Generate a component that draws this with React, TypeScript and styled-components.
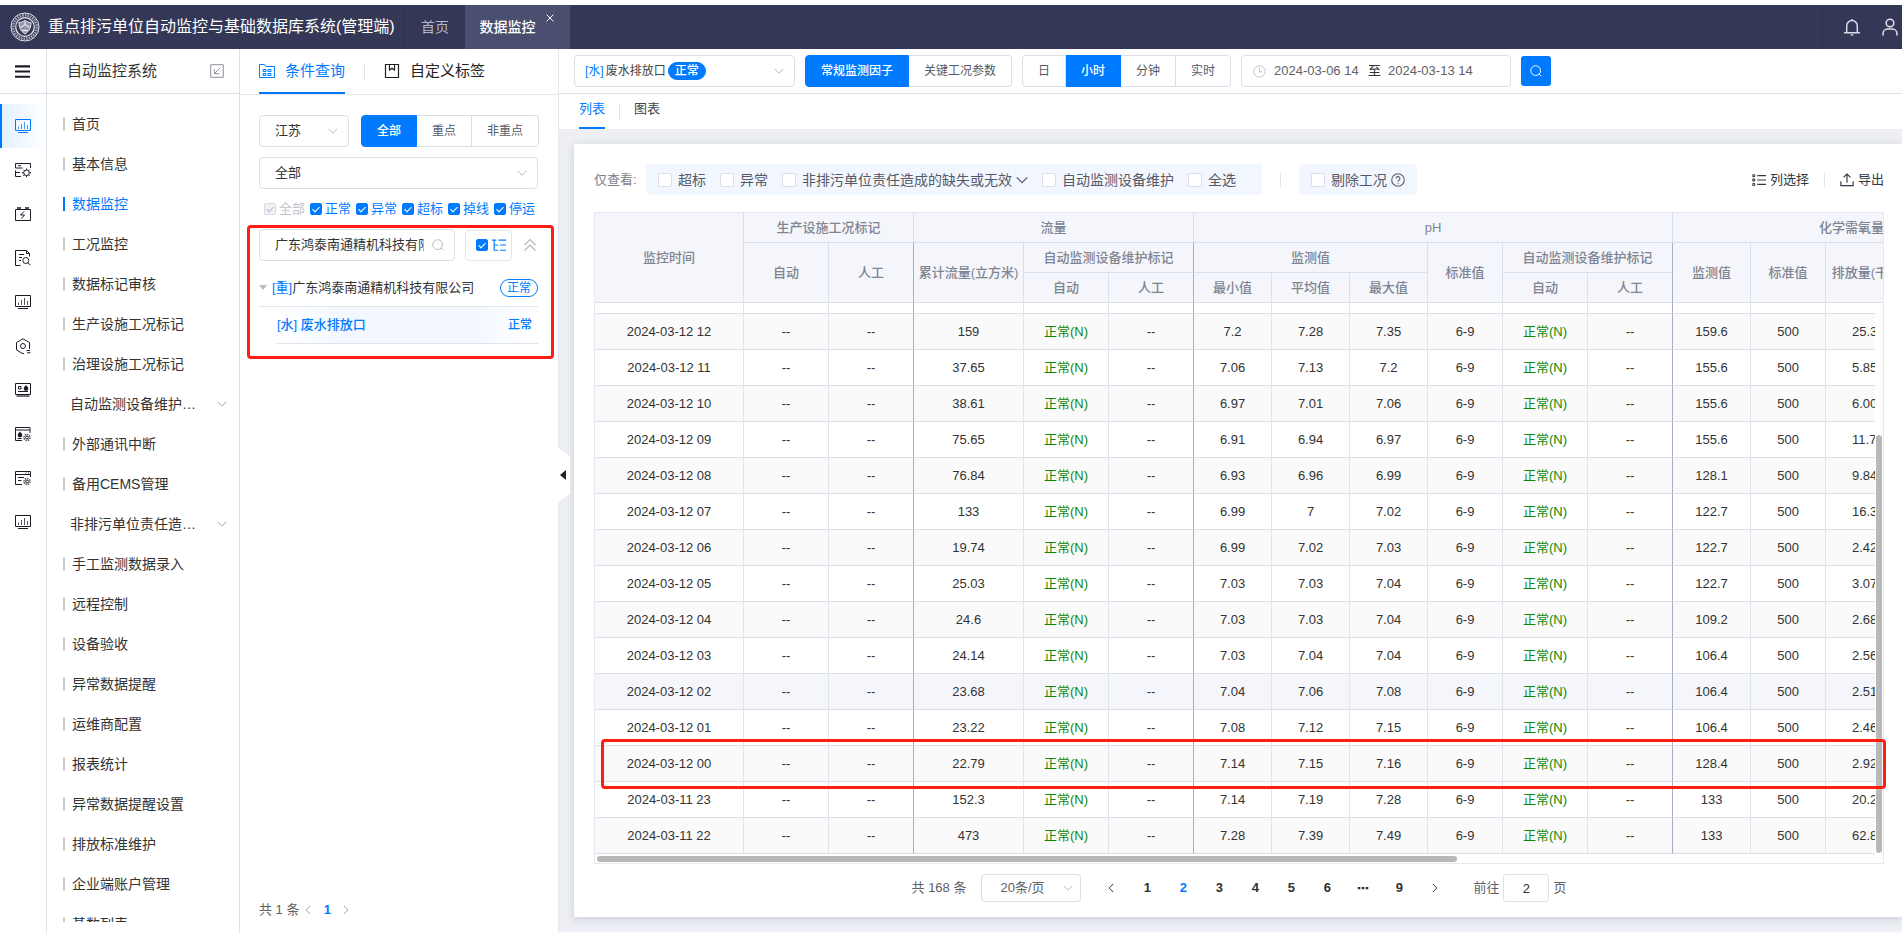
import React from "react";
import styled, { createGlobalStyle, css } from "styled-components";

const BLUE = "#007bff";
const LINE = "#dcdfe9";

const GlobalStyle = createGlobalStyle`
  *, *::before, *::after { box-sizing: border-box; }
  body {
    margin: 0;
    background: #fff;
    color: #333;
    font: 13px/20px "Liberation Sans", "Noto Sans CJK SC", sans-serif;
  }
  button, input, select { font: inherit; color: inherit; margin: 0; }
  button { padding: 0; border: 0; background: none; cursor: pointer; white-space: nowrap; }
  a { color: inherit; text-decoration: none; }
  ul { margin: 0; padding: 0; list-style: none; }
  svg { display: block; flex: none; }
`;

/* ---------- shell ---------- */

const Page = styled.div`
  display: flex;
  flex-direction: column;
  height: 100vh;
  padding: 5px 0 9px;
  overflow: hidden;
`;

const Header = styled.header`
  display: flex;
  flex: none;
  height: 44px;
  background: #343856;
  color: #fff;
`;

const Brand = styled.div`
  display: flex;
  align-items: center;
  gap: 8px;
  width: 405px;
  padding-left: 10px;
  border-right: 1px solid #2c304b;
  font-size: 16px;
  white-space: nowrap;
`;

const HeaderTab = styled.button<{ $active?: boolean }>`
  position: relative;
  padding: 0 16px;
  color: #b4b7c8;
  font-size: 14px;
  ${(p) =>
    p.$active &&
    css`
      width: 105px;
      padding: 0 34px 0 14px;
      background: #4a4f70;
      color: #fff;
      font-weight: 500;
    `}
`;

const TabClose = styled.span`
  position: absolute;
  top: 9px;
  right: 16px;
`;

const HeaderTools = styled.div`
  display: flex;
  align-items: center;
  gap: 20px;
  margin-left: auto;
  padding: 0 3px 0 20px;
  border-left: 1px solid #2c304b;
  color: #dcdde6;
`;

const IconButton = styled.button`
  display: flex;
`;

const Body = styled.div`
  display: flex;
  flex: 1;
  min-height: 0;
`;

const Rail = styled.nav`
  flex: none;
  width: 47px;
  border-right: 1px solid ${LINE};
  color: #1b1d26;
`;

const RailTop = styled.button`
  display: flex;
  align-items: center;
  width: 100%;
  height: 45px;
  margin-bottom: 10px;
  padding-left: 15px;
  border-bottom: 1px solid ${LINE};
`;

const RailItem = styled.a<{ $active?: boolean }>`
  display: flex;
  align-items: center;
  height: 44px;
  padding-left: 15px;
  ${(p) =>
    p.$active &&
    css`
      padding-left: 13px;
      border-left: 2px solid ${BLUE};
      background: linear-gradient(90deg, #e4f1ff, #fff);
      color: ${BLUE};
    `}
`;

const Side = styled.aside`
  display: flex;
  flex-direction: column;
  flex: none;
  width: 193px;
  border-right: 1px solid ${LINE};
`;

const SideTitle = styled.div`
  display: flex;
  flex: none;
  align-items: center;
  justify-content: space-between;
  height: 45px;
  margin-bottom: 10px;
  padding: 0 15px 0 20px;
  border-bottom: 1px solid ${LINE};
  font-size: 15px;
  svg { color: #7d8290; }
`;

const Menu = styled.ul`
  flex: 1;
  min-height: 0;
  margin-bottom: 11px;
  overflow: hidden;
  font-size: 14px;
`;

const MenuLink = styled.a<{ $active?: boolean; $group?: boolean }>`
  display: flex;
  align-items: center;
  gap: 7px;
  height: 40px;
  padding: 0 12px 0 16px;
  color: ${(p) => (p.$active ? BLUE : "#333")};
  white-space: nowrap;
  svg { color: #a0a4ae; }
  &::before {
    content: "";
    width: 2px;
    height: 14px;
    background: ${(p) => (p.$active ? BLUE : "#ccc")};
  }
  ${(p) =>
    p.$group &&
    css`
      justify-content: space-between;
      padding-left: 23px;
      &::before { display: none; }
    `}
`;

/* ---------- query panel ---------- */

const Panel = styled.section`
  display: flex;
  flex-direction: column;
  flex: none;
  width: 319px;
  border-right: 1px solid #e6e8f0;
`;

const PanelTabs = styled.div`
  display: flex;
  flex: none;
  height: 46px;
  padding-left: 19px;
  border-bottom: 1px solid #e4e6ee;
`;

const PanelTab = styled.button<{ $active?: boolean }>`
  display: flex;
  align-items: center;
  gap: 10px;
  border-bottom: 2px solid ${(p) => (p.$active ? BLUE : "transparent")};
  color: ${(p) => (p.$active ? BLUE : "#222")};
  font-size: 15px;
`;

const Divider = styled.i<{ $gap: number }>`
  align-self: center;
  width: 1px;
  height: 14px;
  margin: 0 ${(p) => p.$gap}px;
  background: #dfe2ea;
`;

const PanelBody = styled.div`
  display: flex;
  flex: 1;
  flex-direction: column;
  padding: 20px 20px 13px 19px;
`;

const FilterRow = styled.div`
  display: flex;
  gap: 12px;
  margin-bottom: 10px;
`;

const SelectBox = styled.div<{ $width?: number; $height?: number; $pad?: number }>`
  position: relative;
  flex: ${(p) => (p.$width ? "none" : 1)};
  width: ${(p) => (p.$width ? p.$width + "px" : "auto")};
  select {
    width: 100%;
    height: ${(p) => p.$height || 32}px;
    padding: 0 24px 0 ${(p) => p.$pad || 15}px;
    border: 1px solid ${LINE};
    border-radius: 4px;
    appearance: none;
    background: #fff;
  }
`;

const SelectArrow = styled.span<{ $right?: number }>`
  position: absolute;
  top: 50%;
  right: ${(p) => p.$right || 11}px;
  color: #b4b8c2;
  transform: translateY(-50%);
`;

const Segments = styled.div`
  display: flex;
  height: 32px;
`;

const Segment = styled.button<{ $active?: boolean }>`
  padding: 0 15px;
  border: 1px solid ${LINE};
  border-left-width: 0;
  color: #555a66;
  font-size: 12px;
  &:first-child { border-left-width: 1px; border-radius: 4px 0 0 4px; }
  &:last-child { border-radius: 0 4px 4px 0; }
  ${(p) =>
    p.$active &&
    css`
      border-color: ${BLUE};
      background: ${BLUE};
      color: #fff;
      font-weight: 500;
    `}
`;

const StatusRow = styled.div`
  display: flex;
  gap: 5px;
  margin-bottom: 10px;
  padding-left: 5px;
`;

const CheckLabel = styled.label<{ $gap: number; $color: string; $size: number }>`
  display: inline-flex;
  align-items: center;
  gap: ${(p) => p.$gap}px;
  color: ${(p) => p.$color};
  font-size: ${(p) => p.$size}px;
  white-space: nowrap;
`;

const CheckInput = styled.input.attrs({ type: "checkbox" })<{ $size: number }>`
  position: relative;
  flex: none;
  width: ${(p) => p.$size}px;
  height: ${(p) => p.$size}px;
  border: 1px solid #dcdfe6;
  border-radius: 2px;
  appearance: none;
  background: #fff;
  &:checked { border-color: ${BLUE}; background: ${BLUE}; }
  &:checked::after {
    content: "";
    position: absolute;
    top: 1px;
    left: 3px;
    width: 4px;
    height: 7px;
    border: solid #fff;
    border-width: 0 1px 1px 0;
    transform: rotate(45deg);
  }
  &:disabled { border-color: #d5d8e0; background: #f0f2f6; }
  &:disabled::after { border-color: #b8bcc6; }
`;

const MatchGroup = styled.div`
  position: relative;
`;

const Marker = styled.div`
  position: absolute;
  border: 3px solid #ff1c10;
  border-radius: 4px;
  pointer-events: none;
`;

const MatchMarker = styled(Marker)`
  inset: -4px -16px -15px -12px;
`;

const RowMarker = styled(Marker)`
  top: 527px;
  right: -2px;
  left: 7px;
  height: 50px;
`;

const SearchRow = styled.div`
  display: flex;
  align-items: center;
  gap: 10px;
  margin-bottom: 8px;
  color: #b4b8c2;
`;

const SearchBox = styled.label`
  display: flex;
  align-items: center;
  gap: 8px;
  width: 196px;
  height: 32px;
  padding: 0 10px 0 15px;
  border: 1px solid ${LINE};
  border-radius: 4px;
  input {
    flex: 1;
    min-width: 0;
    padding: 0;
    border: 0;
    outline: 0;
    background: none;
    color: #333;
  }
`;

const TreeToggle = styled.label`
  display: flex;
  align-items: center;
  gap: 4px;
  width: 48px;
  height: 31px;
  padding-left: 10px;
  border: 1px solid #e4e6ee;
  border-radius: 4px;
  color: ${BLUE};
`;

const TreeRow = styled.div`
  display: flex;
  align-items: center;
  height: 38px;
  border-bottom: 1px solid #e2e5ee;
  white-space: nowrap;
`;

const Caret = styled.i`
  margin-right: 5px;
  border: 4px solid transparent;
  border-top: 5px solid #b8bcc8;
  border-bottom: 0;
`;

const Blue = styled.span`
  color: ${BLUE};
`;

const StatusPill = styled.span<{ $solid?: boolean }>`
  height: 18px;
  padding: 0 6px;
  border: 1px solid ${BLUE};
  border-radius: 9px;
  background: ${(p) => (p.$solid ? BLUE : "#fff")};
  color: ${(p) => (p.$solid ? "#fff" : BLUE)};
  font-size: 12px;
  line-height: 16px;
  ${(p) => p.$solid && "font-weight: 500;"}
`;

const TreeChild = styled.a`
  display: flex;
  align-items: center;
  justify-content: space-between;
  height: 37px;
  margin-left: 18px;
  padding-right: 6px;
  border-bottom: 1px solid #e2e5ee;
  background: linear-gradient(90deg, #fff, #f3f8ff 25%, #f3f8ff 75%, #fff);
  color: ${BLUE};
  font-weight: 500;
  small { font-size: 12px; }
`;

const PanelPager = styled.div`
  display: flex;
  align-items: center;
  gap: 4px;
  margin-top: auto;
  color: #606266;
  svg { color: #a0a4ae; }
`;

const PageOne = styled.button`
  width: 20px;
  color: ${BLUE};
  font-weight: bold;
`;

/* ---------- main ---------- */

const Main = styled.main`
  position: relative;
  display: flex;
  flex: 1;
  flex-direction: column;
  min-width: 0;
  border-bottom: 2px solid #f6f8ff;
  background: #edeff4;
`;

const Handle = styled.button`
  position: absolute;
  top: 399px;
  left: -1px;
`;

const Toolbar = styled.div`
  display: flex;
  flex: none;
  align-items: center;
  gap: 10px;
  height: 45px;
  padding: 0 15px;
  border-bottom: 1px solid ${LINE};
  background: #fff;
`;

const OutletSelect = styled.button`
  display: flex;
  align-items: center;
  gap: 2px;
  width: 221px;
  height: 32px;
  padding: 0 10px;
  border: 1px solid ${LINE};
  border-radius: 4px;
  color: #444;
  font-size: 12px;
  svg { margin-left: auto; color: #b4b8c2; }
`;

const DateRange = styled.div`
  display: flex;
  align-items: center;
  width: 270px;
  height: 32px;
  padding-left: 11px;
  border: 1px solid ${LINE};
  border-radius: 4px;
  color: #c0c4cc;
  span { margin-right: 7px; color: #333; }
  input {
    width: 94px;
    padding: 0;
    border: 0;
    outline: 0;
    background: none;
    color: #606266;
  }
  svg { margin-right: 8px; }
`;

const SearchButton = styled.button`
  display: flex;
  align-items: center;
  justify-content: center;
  width: 30px;
  height: 30px;
  border-radius: 3px;
  background: ${BLUE};
  color: #fff;
`;

const ViewTabs = styled.div`
  display: flex;
  flex: none;
  height: 35px;
  padding-left: 20px;
  background: #fff;
`;

const ViewTab = styled.button<{ $active?: boolean }>`
  padding-bottom: 3px;
  border-bottom: 2px solid ${(p) => (p.$active ? BLUE : "transparent")};
  color: ${(p) => (p.$active ? BLUE : "#444")};
`;

const Card = styled.section`
  flex: 1;
  margin: 15px 0 14px 15px;
  padding: 20px 18px 15px 20px;
  background: #fff;
  box-shadow: 0 2px 8px rgba(40, 50, 90, 0.18);
`;

const CardTools = styled.div`
  display: flex;
  align-items: center;
  height: 31px;
  margin-bottom: 17px;
  white-space: nowrap;
`;

const ToolLabel = styled.span`
  width: 52px;
  color: #7d818c;
`;

const CheckGroup = styled.div<{ $end: number }>`
  display: flex;
  align-items: center;
  gap: 14px;
  height: 31px;
  padding: 0 ${(p) => p.$end}px 0 12px;
  border-radius: 4px;
  background: #f2f6fe;
  color: #555a66;
`;

const WithIcon = styled.span`
  display: flex;
  align-items: center;
  gap: 4px;
`;

const ToolButton = styled.button`
  display: flex;
  align-items: center;
  gap: 4px;
  color: #333845;
`;

const Spring = styled.span`
  flex: 1;
`;

const TableArea = styled.div`
  position: relative;
`;

const TableView = styled.div`
  position: relative;
  height: 652px;
  overflow: hidden;
  border: 1px solid #e6e9f2;
`;

const DataTable = styled.table`
  width: 1356px;
  border-spacing: 0;
  table-layout: fixed;
`;

const Th = styled.th<{ $thick?: boolean }>`
  height: 30px;
  padding: 0;
  border-right: 1px solid ${(p) => (p.$thick ? "#a9afc0" : LINE)};
  border-bottom: 1px solid ${LINE};
  background: #f4f6fb;
  color: #7f8492;
  font-weight: 500;
  white-space: nowrap;
`;

const Tr = styled.tr<{ $tone: string; $stub?: boolean }>`
  height: ${(p) => (p.$stub ? 11 : 36)}px;
  background: ${(p) => p.$tone};
`;

const Td = styled.td<{ $thick?: boolean; $ok?: boolean; $cut?: boolean }>`
  padding: 0;
  border-right: 1px solid ${(p) => (p.$thick ? "#a9afc0" : "#e2e4ec")};
  border-bottom: 1px solid ${LINE};
  color: ${(p) => (p.$ok ? "#0a8a0a" : "#333")};
  text-align: center;
  ${(p) => p.$cut && "padding-left: 26px; text-align: left;"}
`;

const VTrack = styled.div`
  position: absolute;
  top: 91px;
  right: 0;
  bottom: 9px;
  width: 8px;
  background: #fff;
  &::after {
    content: "";
    position: absolute;
    top: 131px;
    right: 1px;
    bottom: 1px;
    width: 6px;
    border-radius: 3px;
    background: #b8b8b8;
  }
`;

const HTrack = styled.div`
  position: absolute;
  right: 0;
  bottom: 0;
  left: 0;
  height: 9px;
  padding: 2px;
  background: #fff;
  &::after {
    content: "";
    display: block;
    width: 67%;
    height: 6px;
    border-radius: 3px;
    background: #b8b8b8;
  }
`;

const Pagination = styled.div`
  display: flex;
  align-items: center;
  justify-content: center;
  height: 28px;
  margin-top: 10px;
  color: #606266;
`;

const PageSize = styled.div`
  margin: 0 12px 0 15px;
`;

const PageButton = styled.button<{ $active?: boolean }>`
  display: flex;
  align-items: center;
  justify-content: center;
  width: 36px;
  height: 28px;
  color: ${(p) => (p.$active ? BLUE : "#303133")};
  font-weight: bold;
`;

const JumpLabel = styled.label`
  display: flex;
  align-items: center;
  gap: 4px;
  margin-left: 20px;
  input {
    width: 46px;
    height: 28px;
    padding: 0;
    border: 1px solid ${LINE};
    border-radius: 3px;
    color: #333;
    text-align: center;
  }
`;

/* ---------- icons ---------- */

type IconProps = { size?: number; w?: number; children: React.ReactNode };
const Icon = ({ size = 16, w = 1, children }: IconProps) => (
  <svg width={size} height={size} viewBox="0 0 16 16" fill="none" stroke="currentColor" strokeWidth={w} aria-hidden="true">
    {children}
  </svg>
);

const Chevron = ({ d = "down", size = 10 }: { d?: "down" | "left" | "right"; size?: number }) => (
  <Icon size={size} w={1.6}>
    <path d={{ down: "M1 4.5l7 7 7-7", left: "M11.5 1.5L5 8l6.500 6.500", right: "M4.500 1.500L11 8l-6.500 6.500" }[d]} />
  </Icon>
);

const MonitorIcon = () => (
  <Icon>
    <path d="M.5 1.500h15v11H.5zM3 14.500h10" />
    <path d="M3.500 8.500V11M6.500 6v5M9.500 4v7M12.500 7v4" strokeOpacity=".75" />
  </Icon>
);

const SearchIcon = ({ size = 12 }: { size?: number }) => (
  <Icon size={size} w={1.3}>
    <circle cx="7.500" cy="7.500" r="6.500" />
    <path d="M12.200 12.200L15 15" />
  </Icon>
);

const smallGear = (
  <>
    <circle cx="12" cy="11.500" r="1.400" />
    <circle cx="12" cy="11.500" r="3" strokeDasharray="1.500 .8" strokeWidth="1.600" strokeOpacity=".7" />
  </>
);
const flame = "c-1 1.500-2.300 2-2.300 3.500 0 1.500 1 2.300 2.300 2.300s2.300-.8 2.300-2.300c0-1.500-1.300-2-2.300-3.500z";

const railIcons: React.ReactNode[] = [
  <MonitorIcon />,
  <Icon>
    <path d="M15.500 6V1.500H.5V6h7M3 3.700h3M.5 8.500v6H6M.5 10.500H5" />
    <circle cx="11.500" cy="10.800" r="2.800" />
    <path d="M11.500 6.500V8M11.500 13.600v1.600M7 10.800h1.700M14.300 10.800H16M8.300 7.600l1.200 1.200M13.500 12.800l1.200 1.200M14.700 7.600l-1.200 1.200M9.500 12.800L8.300 14" />
  </Icon>,
  <Icon>
    <path d="M.5 3.500h15v11H.5zM9 5.500L5.500 9h4L6.500 12.500" />
    <path d="M2 2h4M10 2h4" strokeWidth="1.600" />
  </Icon>,
  <Icon>
    <path d="M5.500 15.500H.5V.5h11l3 3v3M11.500.5v3h3M4 4.500h5M4 7.500h3M4 10.500h2" />
    <circle cx="10.800" cy="10.500" r="3" />
    <path d="M13 12.800l2.500 2.500" />
  </Icon>,
  <MonitorIcon />,
  <Icon>
    <path d="M9 15.500l-1 .3-6.500-3.800V4.500L8 .8l6.500 3.700v6.500" />
    <circle cx="8" cy="8" r="2.500" />
    <path d="M11.500 12.500H15M12 14.800h3.500" />
  </Icon>,
  <Icon>
    <path d="M.5 1.500h15v11H.5zM3.500 4.500h2.500v2.500H3.500zM3 9.500h10" />
    <path d="M1.500 14h13" strokeOpacity=".6" strokeWidth="2" />
    <path d={"M11 3" + flame} fill="currentColor" stroke="none" />
  </Icon>,
  <Icon>
    <path d="M7 14.500H.5v-13h14.500V7M.5 4h14.500M2.500 12.500h4" />
    <path d={"M5 5.500" + flame} fill="currentColor" stroke="none" />
    {smallGear}
  </Icon>,
  <Icon>
    <path d="M7 14.500H.5v-13h15V7M.5 4.500h15M10.500 3h1M13 3h1M3 7.500h6M3 10.500h3.500" />
    {smallGear}
  </Icon>,
  <MonitorIcon />,
];

const Emblem = () => (
  <svg width="30" height="30" viewBox="0 0 30 30" fill="none" stroke="#e6e7ee" aria-hidden="true">
    <circle cx="15" cy="15" r="14" strokeWidth="1" />
    <circle cx="15" cy="15" r="11.700" strokeWidth="2.600" strokeDasharray="1.600 1" stroke="#a2a5b8" />
    <circle cx="15" cy="15" r="9.300" strokeWidth="1.200" />
    <path d="M9 10.500c2 0 4-.8 6-2 2 1.200 4 2 6 2 0 5-1.500 8.500-6 11.500-4.500-3-6-6.500-6-11.500z" fill="#8f92a8" />
    <path d="M10.500 15.500l4.500-3 4.500 3M12 18.500h6M15 12v-2.500" strokeWidth="1.300" />
  </svg>
);

/* ---------- data ---------- */

const menu: { text: string; group?: boolean; active?: boolean }[] = [
  { text: "首页" },
  { text: "基本信息" },
  { text: "数据监控", active: true },
  { text: "工况监控" },
  { text: "数据标记审核" },
  { text: "生产设施工况标记" },
  { text: "治理设施工况标记" },
  { text: "自动监测设备维护…", group: true },
  { text: "外部通讯中断" },
  { text: "备用CEMS管理" },
  { text: "非排污单位责任造…", group: true },
  { text: "手工监测数据录入" },
  { text: "远程控制" },
  { text: "设备验收" },
  { text: "异常数据提醒" },
  { text: "运维商配置" },
  { text: "报表统计" },
  { text: "异常数据提醒设置" },
  { text: "排放标准维护" },
  { text: "企业端账户管理" },
  { text: "基数列表" },
];

const columns = [149, 85, 85, 110, 85, 85, 78, 78, 78, 75, 85, 85, 78, 75, 86, 119];

/* time, flow, pH min / mean / max, COD, emission */
const records: string[][] = [
  ["2024-03-12 12", "159", "7.2", "7.28", "7.35", "159.6", "25.3"],
  ["2024-03-12 11", "37.65", "7.06", "7.13", "7.2", "155.6", "5.85"],
  ["2024-03-12 10", "38.61", "6.97", "7.01", "7.06", "155.6", "6.00"],
  ["2024-03-12 09", "75.65", "6.91", "6.94", "6.97", "155.6", "11.7"],
  ["2024-03-12 08", "76.84", "6.93", "6.96", "6.99", "128.1", "9.84"],
  ["2024-03-12 07", "133", "6.99", "7", "7.02", "122.7", "16.3"],
  ["2024-03-12 06", "19.74", "6.99", "7.02", "7.03", "122.7", "2.42"],
  ["2024-03-12 05", "25.03", "7.03", "7.03", "7.04", "122.7", "3.07"],
  ["2024-03-12 04", "24.6", "7.03", "7.03", "7.04", "109.2", "2.68"],
  ["2024-03-12 03", "24.14", "7.03", "7.04", "7.04", "106.4", "2.56"],
  ["2024-03-12 02", "23.68", "7.04", "7.06", "7.08", "106.4", "2.51"],
  ["2024-03-12 01", "23.22", "7.08", "7.12", "7.15", "106.4", "2.46"],
  ["2024-03-12 00", "22.79", "7.14", "7.15", "7.16", "128.4", "2.92"],
  ["2024-03-11 23", "152.3", "7.14", "7.19", "7.28", "133", "20.2"],
  ["2024-03-11 22", "473", "7.28", "7.39", "7.49", "133", "62.8"],
];
const HOVERED = "2024-03-12 02";
const OK = "正常(N)";

const toCells = ([time, flow, min, avg, max, cod, out]: string[]) => [
  time, "--", "--", flow, OK, "--", min, avg, max, "6-9", OK, "--", cod, "500", out, "",
];
const isThick = (col: number) => col === 2 || col === 5 || col === 11;

/* ---------- parts ---------- */

const Check = ({ text, size, gap, color, fontSize, ...rest }: {
  text: string; size: number; gap: number; color: string; fontSize: number; checked?: boolean; disabled?: boolean;
}) => (
  <CheckLabel $gap={gap} $color={color} $size={fontSize}>
    <CheckInput $size={size} defaultChecked={rest.checked} disabled={rest.disabled} />
    {text}
  </CheckLabel>
);

const ViewCheck = ({ text }: { text: string }) => (
  <Check text={text} size={14} gap={6} color="#555a66" fontSize={14} />
);

const QueryPanel = () => (
  <Panel>
    <PanelTabs>
      <PanelTab $active>
        <Icon>
          <path d="M.5 14.500v-13h5l1.500 2h8.500v11z" />
          <path d="M4 6.500h3v2H4zM9 6.500h3v2H9zM4 10.500h3v2H4zM9 10.500h3v2H9z" />
        </Icon>
        条件查询
      </PanelTab>
      <Divider $gap={19} />
      <PanelTab>
        <Icon w={1.2}>
          <path d="M1.500 1.500h13v13h-13zM5.500 1.500V7L8 5.200 10.500 7V1.500" />
        </Icon>
        自定义标签
      </PanelTab>
    </PanelTabs>
    <PanelBody>
      <FilterRow>
        <SelectBox $width={90}>
          <select aria-label="省份"><option>江苏</option></select>
          <SelectArrow><Chevron /></SelectArrow>
        </SelectBox>
        <Segments>
          <Segment $active>全部</Segment>
          <Segment>重点</Segment>
          <Segment>非重点</Segment>
        </Segments>
      </FilterRow>
      <FilterRow>
        <SelectBox>
          <select aria-label="行业"><option>全部</option></select>
          <SelectArrow><Chevron /></SelectArrow>
        </SelectBox>
      </FilterRow>
      <StatusRow>
        <Check text="全部" size={12} gap={3} color="#c0c4cc" fontSize={13} checked disabled />
        {["正常", "异常", "超标", "掉线", "停运"].map((t) => (
          <Check key={t} text={t} size={12} gap={3} color={BLUE} fontSize={13} checked />
        ))}
      </StatusRow>
      <MatchGroup>
        <SearchRow>
          <SearchBox>
            <input aria-label="企业名称" defaultValue="广东鸿泰南通精机科技有限公司" />
            <SearchIcon />
          </SearchBox>
          <TreeToggle>
            <CheckInput $size={12} defaultChecked aria-label="树形展示" />
            <Icon size={14} w={1.3}>
              <path d="M0 2.500h5M2.500 2.500v11.500h4.500M2.500 8h4.500M7.500 2.500H16M9 8h7M9 14h7" />
            </Icon>
          </TreeToggle>
          <IconButton aria-label="收起">
            <Icon size={16} w={1.2}><path d="M2.500 8L8 2.500 13.500 8M2.500 13.500L8 8l5.500 5.500" /></Icon>
          </IconButton>
        </SearchRow>
        <TreeRow>
          <Caret />
          <Blue>[重]</Blue>
          广东鸿泰南通精机科技有限公司
          <Spring />
          <StatusPill>正常</StatusPill>
        </TreeRow>
        <TreeChild href="#outlet">
          [水] 废水排放口
          <small>正常</small>
        </TreeChild>
        <MatchMarker />
      </MatchGroup>
      <PanelPager>
        共 1 条
        <IconButton aria-label="上一页"><Chevron d="left" /></IconButton>
        <PageOne>1</PageOne>
        <IconButton aria-label="下一页"><Chevron d="right" /></IconButton>
      </PanelPager>
    </PanelBody>
  </Panel>
);

const MonitorTable = () => (
  <TableArea>
    <TableView>
      <DataTable>
        <colgroup>
          {columns.map((w, i) => <col key={i} width={w} />)}
        </colgroup>
        <thead>
          <tr>
            <Th rowSpan={3}>监控时间</Th>
            <Th colSpan={2}>生产设施工况标记</Th>
            <Th colSpan={3}>流量</Th>
            <Th colSpan={6}>pH</Th>
            <Th colSpan={4}>化学需氧量</Th>
          </tr>
          <tr>
            <Th rowSpan={2}>自动</Th>
            <Th rowSpan={2} $thick>人工</Th>
            <Th rowSpan={2}>累计流量(立方米)</Th>
            <Th colSpan={2} $thick>自动监测设备维护标记</Th>
            <Th colSpan={3}>监测值</Th>
            <Th rowSpan={2}>标准值</Th>
            <Th colSpan={2} $thick>自动监测设备维护标记</Th>
            <Th rowSpan={2}>监测值</Th>
            <Th rowSpan={2}>标准值</Th>
            <Th rowSpan={2}>排放量(千克)</Th>
            <Th rowSpan={2} />
          </tr>
          <tr>
            <Th>自动</Th>
            <Th $thick>人工</Th>
            <Th>最小值</Th>
            <Th>平均值</Th>
            <Th>最大值</Th>
            <Th>自动</Th>
            <Th $thick>人工</Th>
          </tr>
        </thead>
        <tbody>
          <Tr $tone="#fff" $stub>
            {columns.map((_, i) => <Td key={i} $thick={isThick(i)} />)}
          </Tr>
          {records.map((r, n) => (
            <Tr key={r[0]} $tone={r[0] === HOVERED ? "#f4f6fb" : n % 2 ? "#fff" : "#fafafa"}>
              {toCells(r).map((v, i) => (
                <Td key={i} $thick={isThick(i)} $ok={v === OK} $cut={i === 14}>{v}</Td>
              ))}
            </Tr>
          ))}
        </tbody>
      </DataTable>
      <VTrack />
      <HTrack />
    </TableView>
    <RowMarker />
  </TableArea>
);

export default function App() {
  return (
    <Page>
      <GlobalStyle />
      <Header>
        <Brand><Emblem />重点排污单位自动监控与基础数据库系统(管理端)</Brand>
        <HeaderTab>首页</HeaderTab>
        <HeaderTab $active>
          数据监控
          <TabClose><Icon size={8} w={2}><path d="M1 1l14 14M15 1L1 15" /></Icon></TabClose>
        </HeaderTab>
        <HeaderTools>
          <IconButton aria-label="消息">
            <Icon size={18} w={1.3}>
              <path d="M3.300 13V7a4.700 4.700 0 0 1 9.400 0v6M1 13.200h14M6.800 15h2.400M8 2.300V.8" />
            </Icon>
          </IconButton>
          <IconButton aria-label="用户">
            <Icon size={18} w={1.400}>
              <circle cx="8" cy="4.500" r="3.400" />
              <path d="M1.800 15.500v-1.300c0-2.500 1.700-4.400 4-4.400h4.400c2.300 0 4 1.900 4 4.400v1.300" />
            </Icon>
          </IconButton>
        </HeaderTools>
      </Header>
      <Body>
        <Rail>
          <RailTop aria-label="菜单">
            <Icon size={15} w={2.200}><path d="M0 2.500h16M0 8h16M0 13.500h16" /></Icon>
          </RailTop>
          {railIcons.map((icon, i) => (
            <RailItem key={i} href={"#module-" + i} $active={i === 0}>{icon}</RailItem>
          ))}
        </Rail>
        <Side>
          <SideTitle>
            自动监控系统
            <Icon size={14}>
              <path d="M.8.800h14.400v14.400H.8zM11.500 4.500l-6.500 6.500M5 6v5h5.500" />
            </Icon>
          </SideTitle>
          <Menu>
            {menu.map((m) => (
              <li key={m.text}>
                <MenuLink href="#menu" $active={m.active} $group={m.group}>
                  {m.text}
                  {m.group && <Chevron />}
                </MenuLink>
              </li>
            ))}
          </Menu>
        </Side>
        <QueryPanel />
        <Main>
          <Toolbar>
            <OutletSelect aria-haspopup="listbox">
              <Blue>[水]</Blue>
              废水排放口
              <StatusPill $solid>正常</StatusPill>
              <Chevron />
            </OutletSelect>
            <Segments>
              <Segment $active>常规监测因子</Segment>
              <Segment>关键工况参数</Segment>
            </Segments>
            <Segments>
              <Segment>日</Segment>
              <Segment $active>小时</Segment>
              <Segment>分钟</Segment>
              <Segment>实时</Segment>
            </Segments>
            <DateRange>
              <Icon size={13} w={1.200}>
                <circle cx="8" cy="8" r="7" />
                <path d="M8 3.500V8.500h4" />
              </Icon>
              <input aria-label="开始时间" defaultValue="2024-03-06 14" />
              <span>至</span>
              <input aria-label="结束时间" defaultValue="2024-03-13 14" />
            </DateRange>
            <SearchButton aria-label="查询"><SearchIcon /></SearchButton>
          </Toolbar>
          <ViewTabs>
            <ViewTab $active>列表</ViewTab>
            <Divider $gap={14} />
            <ViewTab>图表</ViewTab>
          </ViewTabs>
          <Card>
            <CardTools>
              <ToolLabel>仅查看:</ToolLabel>
              <CheckGroup $end={26}>
                <ViewCheck text="超标" />
                <ViewCheck text="异常" />
                <WithIcon>
                  <ViewCheck text="非排污单位责任造成的缺失或无效" />
                  <Chevron size={12} />
                </WithIcon>
                <ViewCheck text="自动监测设备维护" />
                <ViewCheck text="全选" />
              </CheckGroup>
              <Divider $gap={18} />
              <CheckGroup $end={12}>
                <WithIcon>
                  <ViewCheck text="剔除工况" />
                  <Icon size={14} w={1.200}>
                    <circle cx="8" cy="8" r="7.200" />
                    <path d="M5.800 6.300a2.200 2.200 0 1 1 3.200 2c-.7.400-1 .8-1 1.500M8 11v1.400" />
                  </Icon>
                </WithIcon>
              </CheckGroup>
              <Spring />
              <ToolButton>
                <Icon size={14} w={1.200}>
                  <path d="M6 3h10M6 8h10M6 13h10" />
                  <circle cx="2" cy="3" r="1.300" /><circle cx="2" cy="8" r="1.300" /><circle cx="2" cy="13" r="1.300" />
                </Icon>
                列选择
              </ToolButton>
              <Divider $gap={15} />
              <ToolButton>
                <Icon size={14} w={1.300}>
                  <path d="M1 9.500v5h14v-5M8 11V1.500M4 5l4-3.800L12 5" />
                </Icon>
                导出
              </ToolButton>
            </CardTools>
            <MonitorTable />
            <Pagination>
              共 168 条
              <PageSize>
                <SelectBox $width={100} $height={28} $pad={18}>
                  <select aria-label="每页条数"><option>20条/页</option></select>
                  <SelectArrow $right={8}><Chevron /></SelectArrow>
                </SelectBox>
              </PageSize>
              <PageButton aria-label="上一页"><Chevron d="left" /></PageButton>
              {["1", "2", "3", "4", "5", "6", "more", "9"].map((p) => (
                <PageButton key={p} $active={p === "2"} aria-label={p === "more" ? "更多页" : undefined}>
                  {p === "more" ? (
                    <Icon size={12}>
                      <path d="M1 8h3.500M6.300 8h3.500M11.600 8H15" strokeWidth="3" />
                    </Icon>
                  ) : p}
                </PageButton>
              ))}
              <PageButton aria-label="下一页"><Chevron d="right" /></PageButton>
              <JumpLabel>
                前往
                <input defaultValue="2" />
                页
              </JumpLabel>
            </Pagination>
          </Card>
          <Handle aria-label="收起面板">
            <svg width="13" height="54" viewBox="0 0 13 54" aria-hidden="true">
              <path d="M0 0l12 8v38L0 54z" fill="#fff" />
              <path d="M8 22v10l-6-5z" fill="#222" />
            </svg>
          </Handle>
        </Main>
      </Body>
    </Page>
  );
}
